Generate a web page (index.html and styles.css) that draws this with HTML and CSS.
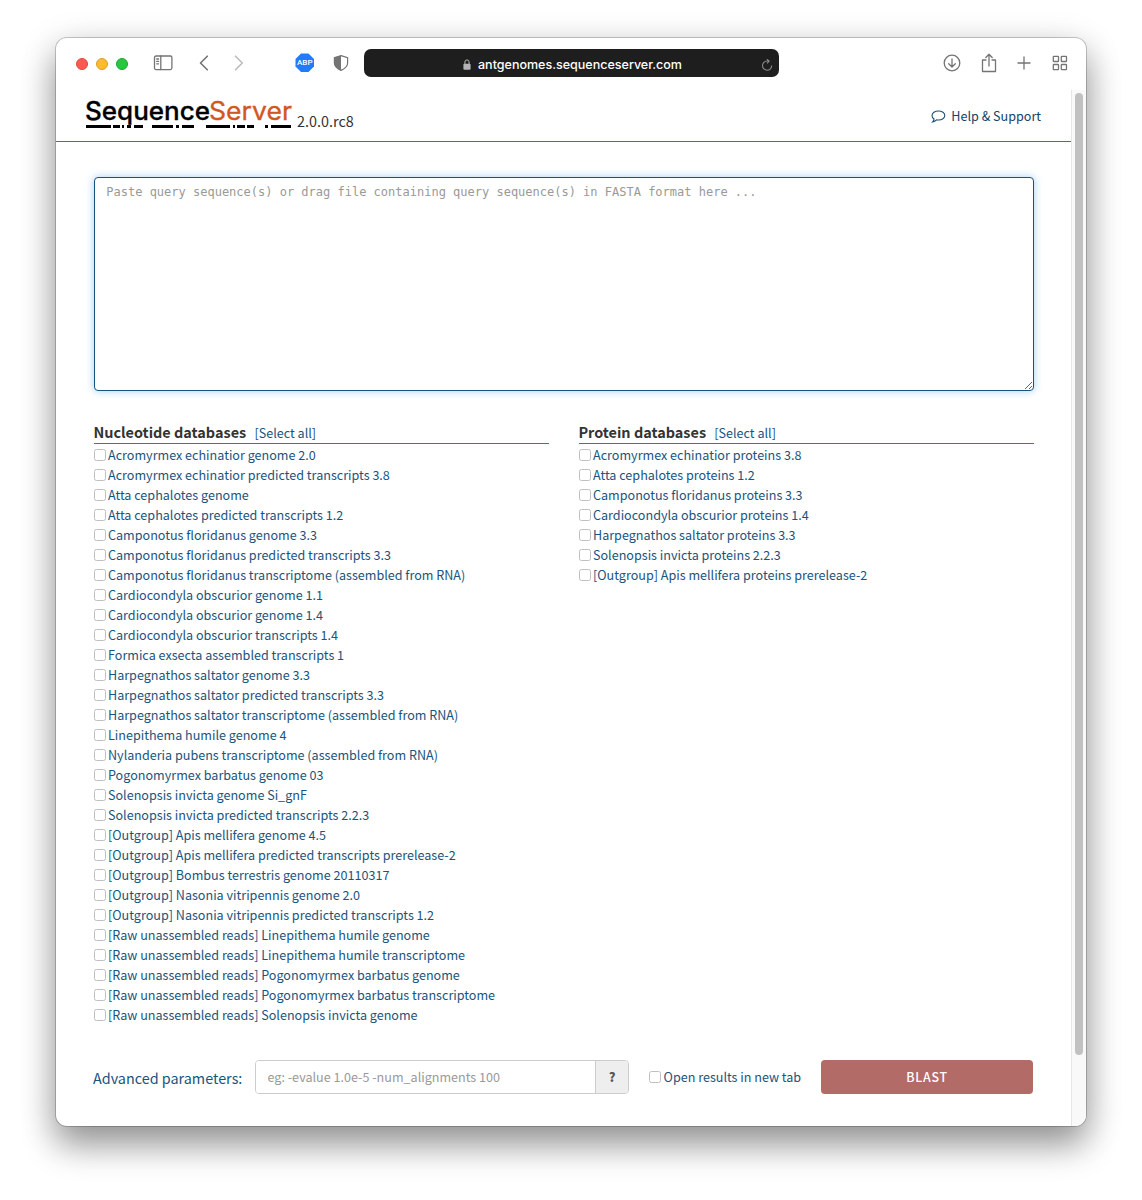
FILE: index.html
```html
<!DOCTYPE html>
<html lang="en">
<head>
<meta charset="utf-8">
<title>SequenceServer</title>
<link rel="stylesheet" href="styles.css">
</head>
<body>
<div class="window">
  <div class="toolbar">
    <div class="lights"><i class="light red"></i><i class="light amber"></i><i class="light green"></i></div>
    <svg class="ic sidebar" width="20" height="16" viewBox="0 0 20 16"><rect x="1.500" y="1" width="17.400" height="13.600" rx="1.500"/><path d="M7.800 1v13.600M3.700 4h1.900M3.700 6.400h1.900M3.700 8.800h1.900"/></svg>
    <svg class="ic back" width="10" height="16" viewBox="0 0 10 16"><path d="M8.300 1.200 1.500 8l6.800 6.800"/></svg>
    <svg class="ic forward" width="10" height="16" viewBox="0 0 10 16"><path d="m1.500 1.200 6.800 6.800-6.800 6.800"/></svg>
    <svg class="abp" width="20" height="20" viewBox="0 0 20 20"><path d="M6 .5h7.500L19 6v7.500L13.500 19H6L.5 13.500V6z"/><text x="9.800" y="12.400" text-anchor="middle" textLength="15.500">ABP</text></svg>
    <svg class="shield" width="16" height="18" viewBox="0 0 16 18"><path class="outline" d="M8 1.600 14.600 3.600V9c0 3.500-2.800 5.800-6.600 7.400C4.200 14.800 1.400 12.500 1.400 9V3.600z"/><path class="half" d="M8 1.600v14.800C4.200 14.800 1.400 12.500 1.400 9V3.600z"/></svg>
    <div class="address">
      <svg class="lock" width="8" height="11" viewBox="0 0 8 11"><rect x=".4" y="4.700" width="7.200" height="6" rx="1"/><path d="M1.900 5V3a2.100 2.100 0 0 1 4.200 0v2"/></svg>
      <span>antgenomes.sequenceserver.com</span>
      <svg class="reload" width="12" height="12" viewBox="0 0 12 12"><path d="M10.700 6.500A4.600 4.600 0 1 1 6.100 2h1.800M5.800.2l2.300 1.900L6.100 4.300"/></svg>
    </div>
    <div class="tools">
      <svg class="ic" width="18" height="18" viewBox="0 0 18 18"><circle cx="9" cy="9" r="7.800"/><path d="M9 4.800v8M5.700 9.700 9 13l3.300-3.300"/></svg>
      <svg class="ic" width="16" height="20" viewBox="0 0 16 20"><path d="M5 7H1.500v11.500h13V7H11M8 13V1.500M4.800 4.500 8 1.300l3.200 3.200"/></svg>
      <svg class="ic" width="14" height="14" viewBox="0 0 14 14"><path d="M7 1v12M1 7h12"/></svg>
      <svg class="ic" width="16" height="16" viewBox="0 0 16 16"><rect x="1.300" y="1.300" width="5.200" height="5.200" rx=".6"/><rect x="9.300" y="1.300" width="5.200" height="5.200" rx=".6"/><rect x="1.300" y="9.500" width="5.200" height="5.200" rx=".6"/><rect x="9.300" y="9.500" width="5.200" height="5.200" rx=".6"/></svg>
    </div>
  </div>
  <div class="viewport">
    <div class="page">
      <header class="header">
        <svg class="logo" width="206" height="32" viewBox="0 0 206 32">
          <text x="-1" y="22" textLength="125" lengthAdjust="spacingAndGlyphs">Sequence</text><text class="accent" x="123" y="22" textLength="83" lengthAdjust="spacingAndGlyphs">Server</text>
          <path d="M0 27h25v3H0zM27 27h7v3h-7zM36 27h2v3h-2zM41 27h4v3h-4zM48 27h9v3h-9zM66 27h21v3H66zM90 27h3v3h-3zM96 27h12v3H96zM120 27h24v3h-24zM147 27h2v3h-2zM151 27h8v3h-8zM161 27h7v3h-7zM179 27h3v3h-3zM185 27h20v3h-20z"/>
        </svg>
        <span class="version">2.0.0.rc8</span>
        <a class="help"><svg width="15" height="13" viewBox="0 0 15 13"><path d="M7.500 1C11 1 13.800 3 13.800 5.500S11 10 7.500 10c-.7 0-1.300-.1-1.900-.2C4.500 10.900 3.300 11.700 1.700 11.900c.8-.8 1.300-1.700 1.300-2.900C1.800 8.200 1 7 1 5.500 1 3 4 1 7.500 1z"/></svg><span>Help &amp; Support</span></a>
      </header>
      <main class="content">
        <textarea class="query" spellcheck="false" placeholder="Paste query sequence(s) or drag file containing query sequence(s) in FASTA format here ..."></textarea>
        <div class="databases">
          <section>
            <h4>Nucleotide databases <a>[Select all]</a></h4>
            <ul>
              <li><i class="box"></i>Acromyrmex echinatior genome 2.0</li>
              <li><i class="box"></i>Acromyrmex echinatior predicted transcripts 3.8</li>
              <li><i class="box"></i>Atta cephalotes genome</li>
              <li><i class="box"></i>Atta cephalotes predicted transcripts 1.2</li>
              <li><i class="box"></i>Camponotus floridanus genome 3.3</li>
              <li><i class="box"></i>Camponotus floridanus predicted transcripts 3.3</li>
              <li><i class="box"></i>Camponotus floridanus transcriptome (assembled from RNA)</li>
              <li><i class="box"></i>Cardiocondyla obscurior genome 1.1</li>
              <li><i class="box"></i>Cardiocondyla obscurior genome 1.4</li>
              <li><i class="box"></i>Cardiocondyla obscurior transcripts 1.4</li>
              <li><i class="box"></i>Formica exsecta assembled transcripts 1</li>
              <li><i class="box"></i>Harpegnathos saltator genome 3.3</li>
              <li><i class="box"></i>Harpegnathos saltator predicted transcripts 3.3</li>
              <li><i class="box"></i>Harpegnathos saltator transcriptome (assembled from RNA)</li>
              <li><i class="box"></i>Linepithema humile genome 4</li>
              <li><i class="box"></i>Nylanderia pubens transcriptome (assembled from RNA)</li>
              <li><i class="box"></i>Pogonomyrmex barbatus genome 03</li>
              <li><i class="box"></i>Solenopsis invicta genome Si_gnF</li>
              <li><i class="box"></i>Solenopsis invicta predicted transcripts 2.2.3</li>
              <li><i class="box"></i>[Outgroup] Apis mellifera genome 4.5</li>
              <li><i class="box"></i>[Outgroup] Apis mellifera predicted transcripts prerelease-2</li>
              <li><i class="box"></i>[Outgroup] Bombus terrestris genome 20110317</li>
              <li><i class="box"></i>[Outgroup] Nasonia vitripennis genome 2.0</li>
              <li><i class="box"></i>[Outgroup] Nasonia vitripennis predicted transcripts 1.2</li>
              <li><i class="box"></i>[Raw unassembled reads] Linepithema humile genome</li>
              <li><i class="box"></i>[Raw unassembled reads] Linepithema humile transcriptome</li>
              <li><i class="box"></i>[Raw unassembled reads] Pogonomyrmex barbatus genome</li>
              <li><i class="box"></i>[Raw unassembled reads] Pogonomyrmex barbatus transcriptome</li>
              <li><i class="box"></i>[Raw unassembled reads] Solenopsis invicta genome</li>
            </ul>
          </section>
          <section>
            <h4>Protein databases <a>[Select all]</a></h4>
            <ul>
              <li><i class="box"></i>Acromyrmex echinatior proteins 3.8</li>
              <li><i class="box"></i>Atta cephalotes proteins 1.2</li>
              <li><i class="box"></i>Camponotus floridanus proteins 3.3</li>
              <li><i class="box"></i>Cardiocondyla obscurior proteins 1.4</li>
              <li><i class="box"></i>Harpegnathos saltator proteins 3.3</li>
              <li><i class="box"></i>Solenopsis invicta proteins 2.2.3</li>
              <li><i class="box"></i>[Outgroup] Apis mellifera proteins prerelease-2</li>
            </ul>
          </section>
        </div>
        <div class="options">
          <label class="params">Advanced parameters:</label>
          <div class="group"><input class="advanced" placeholder="eg: -evalue 1.0e-5 -num_alignments 100"><span class="hint">?</span></div>
          <label class="newtab"><i class="box"></i>Open results in new tab</label>
          <button class="blast">BLAST</button>
        </div>
      </main>
    </div>
    <div class="scrollbar"><div class="thumb"></div></div>
  </div>
</div>
</body>
</html>
```
FILE: styles.css
```css
* { box-sizing: border-box; }
body {
  margin: 0;
  height: 1200px;
  padding: 38px 56px 74px;
  overflow: hidden;
  background: #fff;
  color: #333;
  font: 12.59px/20px "Noto Sans CJK SC", "Noto Sans", sans-serif;
}
.window {
  display: flex;
  flex-direction: column;
  height: 1088px;
  border-radius: 11px;
  background: #fff;
  overflow: hidden;
  box-shadow: 0 0 0 1px rgba(0, 0, 0, .2), 0 20px 34px rgba(0, 0, 0, .33), 0 8px 36px rgba(0, 0, 0, .18);
}
.toolbar { display: flex; align-items: center; height: 52px; padding: 0 18px 2px 20px; }
.lights { display: flex; gap: 8px; width: 77px; padding-top: 2px; }
.light { width: 12px; height: 12px; border-radius: 50%; border: 1px solid; }
.red { background: #ff5951; border-color: #dd4841; }
.amber { background: #ffbb2f; border-color: #dd9d26; }
.green { background: #27c840; border-color: #1ca631; }
.ic { fill: none; stroke: #747474; stroke-width: 1.3; stroke-linecap: round; stroke-linejoin: round; }
.back { margin-left: 26px; stroke-width: 1.6; }
.forward { margin-left: 25px; stroke: #bcbcbc; stroke-width: 1.6; }
.abp { margin-left: 51px; fill: #227bf8; }
.abp text { fill: #fff; font: 500 8px Roboto, sans-serif; }
.shield { margin-left: 18px; }
.outline { fill: none; stroke: #747474; stroke-width: 1.2; }
.half { fill: #747474; }
.address {
  display: flex;
  align-items: center;
  width: 415px;
  height: 28px;
  margin: 0 0 0 15px;
  padding: 3px 6px 0 99px;
  border-radius: 7px;
  background: #1e1e1e;
  color: #fff;
  font: 500 12.52px Inter, sans-serif;
}
.lock { margin-right: 7px; fill: #b4b4b4; }
.lock path { fill: none; stroke: #b4b4b4; stroke-width: 1; }
.reload { margin-left: auto; fill: none; stroke: #8a8a8a; stroke-width: 1.1; }
.tools { display: flex; align-items: center; margin-left: auto; gap: 21px; }
.tools .ic:nth-child(2) { margin-right: -1px; }
.tools .ic:first-child { margin-right: -1px; }
.viewport { display: flex; flex: 1; min-height: 0; }
.page { flex: 1; }
.scrollbar { width: 15px; padding: 3px 3px 0; border-left: 1px solid #e6e6e6; background: #f9f9f9; }
.thumb { width: 8px; height: 962px; border-radius: 4px; background: #c1c1c1; }
.header { display: flex; height: 52px; padding: 8px 30px 0; border-bottom: 1px solid #c5481a; }
.logo { font: 500 25px Inter, sans-serif; overflow: visible; }
.logo text { stroke: #000; stroke-width: .3; }
.logo .accent { fill: #d2571f; stroke: #d2571f; font-weight: 400; }
.version { margin: 13px 0 0 5px; font-size: 14.4px; }
.help { display: flex; align-items: center; height: 20px; margin: 8px 0 0 auto; gap: 5px; color: #13436b; }
.help svg { fill: none; stroke: #1c5075; stroke-width: 1.1; }
.content { padding: 35px 36px 0 38px; }
.query {
  display: block;
  width: 940px;
  height: 214px;
  padding: 6px 11.3px;
  border: 1px solid #19547d;
  border-radius: 4px;
  outline: 0;
  box-shadow: 0 0 8px rgba(102, 175, 233, .6);
  font: 12px/17px "DejaVu Sans Mono", monospace;
}
::placeholder { color: #999; opacity: 1; }
.databases { display: flex; gap: 30px; margin-top: 32px; }
section { width: 455px; }
h4 { height: 21px; margin: 0 0 1px; border-bottom: 1px solid #c5481a; font-size: 14.45px; font-weight: 700; line-height: 18px; white-space: pre; text-indent: -.6px; }
h4 a { margin-left: 5px; color: #19547d; font-size: 12.59px; font-weight: 400; }
ul { margin: 0; padding: 0; list-style: none; color: #19547d; }
li { display: flex; align-items: center; height: 20px; }
.box { flex: none; width: 12px; height: 12px; margin-right: 2px; border: 1px solid #bfbfbf; border-radius: 2.5px; background: #fff; }
.options { display: flex; align-items: center; height: 34px; margin-top: 35px; color: #19547d; }
.params { width: 162px; margin-left: -1px; font-size: 14.38px; padding-top: 1px; }
.group { display: flex; width: 374px; height: 34px; border: 1px solid #ccc; border-radius: 4px; overflow: hidden; }
.advanced { width: 339px; padding: 0 11.5px; border: 0; outline: 0; background: #fff; font: inherit; }
.hint { flex: 1; border-left: 1px solid #ccc; background: #eee; color: #555; font-weight: 900; line-height: 32px; text-align: center; }
.newtab { display: flex; align-items: center; width: 172px; margin-left: 20px; }
.newtab .box { margin-right: 2.6px; }
.blast { width: 212px; height: 34px; padding: 0; border: 0; border-radius: 4px; background: #b36b67; color: #fff; font: 500 12.4px/34px "Noto Sans CJK SC", sans-serif; letter-spacing: .8px; }
```
